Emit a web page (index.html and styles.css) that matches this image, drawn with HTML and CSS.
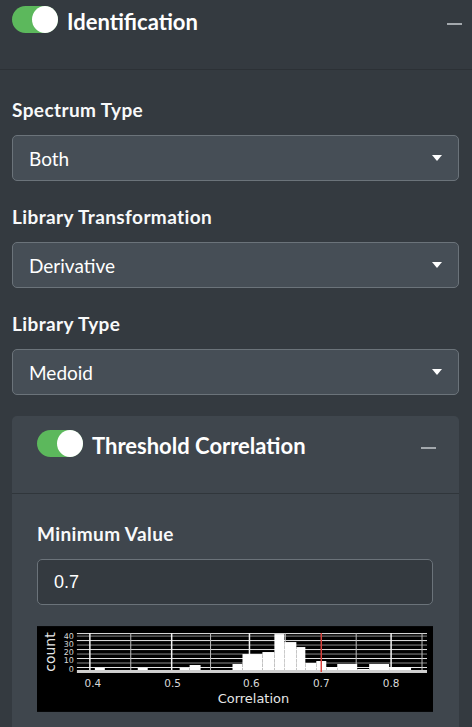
FILE: index.html
```html
<!DOCTYPE html>
<html>
<head>
<meta charset="utf-8">
<link rel="stylesheet" href="styles.css">
</head>
<body>
<div class="box-header">
  <div class="toggle"><span class="knob"></span></div>
  <div class="title">Identification</div>
  <div class="minus"></div>
</div>
<div class="box-body">
  <div class="field">
    <div class="label">Spectrum Type</div>
    <div class="select"><span>Both</span><span class="caret"></span></div>
  </div>
  <div class="field">
    <div class="label">Library Transformation</div>
    <div class="select"><span>Derivative</span><span class="caret"></span></div>
  </div>
  <div class="field">
    <div class="label">Library Type</div>
    <div class="select"><span>Medoid</span><span class="caret"></span></div>
  </div>
  <div class="card">
    <div class="card-header">
      <div class="toggle"><span class="knob"></span></div>
      <div class="title">Threshold Correlation</div>
      <div class="minus"></div>
    </div>
    <div class="card-body">
      <div class="label">Minimum Value</div>
      <div class="input">0.7</div>
      <div class="plot">
        <svg width="397" height="86" viewBox="0 0 397 86" xmlns="http://www.w3.org/2000/svg">
          <rect x="0" y="0" width="397" height="86" fill="#000"/>
          <g stroke="#8a8a8a" stroke-width="1">
            <line x1="40" y1="10" x2="391" y2="10"/>
            <line x1="40" y1="19" x2="391" y2="19"/>
            <line x1="40" y1="28" x2="391" y2="28"/>
            <line x1="40" y1="37" x2="391" y2="37"/>
          </g>
          <g stroke="#e6e6e6" stroke-width="1">
            <line x1="40" y1="7.5" x2="391" y2="7.5"/>
            <line x1="40" y1="14.5" x2="391" y2="14.5"/>
            <line x1="40" y1="23.5" x2="391" y2="23.5"/>
            <line x1="40" y1="32.5" x2="391" y2="32.5"/>
            <line x1="40" y1="41.5" x2="391" y2="41.5"/>
          </g>
          <g stroke="#bdbdbd" stroke-width="1">
            <line x1="94" y1="7" x2="94" y2="46"/>
            <line x1="174" y1="7" x2="174" y2="46"/>
            <line x1="249" y1="7" x2="249" y2="46"/>
            <line x1="320" y1="7" x2="320" y2="46"/>
            <line x1="386" y1="7" x2="386" y2="46"/>
          </g>
          <g stroke="#f2f2f2" stroke-width="1.5">
            <line x1="53" y1="7" x2="53" y2="46"/>
            <line x1="135" y1="7" x2="135" y2="46"/>
            <line x1="213" y1="7" x2="213" y2="46"/>
            <line x1="355" y1="7" x2="355" y2="46"/>
          </g>
          <rect x="40" y="44" width="351" height="3" fill="#cfcfcf"/>
          <g fill="#fff">
            <rect x="58" y="42" width="10" height="2"/>
            <rect x="101" y="42" width="10" height="2"/>
            <rect x="143" y="42" width="10" height="2"/>
            <rect x="153" y="39" width="11" height="5"/>
            <rect x="196" y="38" width="10" height="6"/>
            <rect x="206" y="28" width="20" height="16"/>
            <rect x="226" y="26" width="12" height="18"/>
            <rect x="238" y="8" width="10" height="36"/>
            <rect x="248" y="16" width="12" height="28"/>
            <rect x="260" y="21" width="9" height="23"/>
            <rect x="269" y="37" width="11" height="7"/>
            <rect x="280" y="35" width="10" height="9"/>
            <rect x="290" y="41" width="11" height="3"/>
            <rect x="301" y="38" width="20" height="6"/>
            <rect x="321" y="43" width="12" height="1"/>
            <rect x="333" y="38" width="20" height="6"/>
            <rect x="353" y="41" width="22" height="3"/>
          </g>
          <line x1="285" y1="7" x2="285" y2="46" stroke="#d9413c" stroke-width="1.5"/>
          <g fill="#d9d9d9" font-family="DejaVu Sans, sans-serif" font-size="10.5" text-anchor="middle">
            <text x="56" y="61">0.4</text>
            <text x="136" y="61">0.5</text>
            <text x="215" y="61">0.6</text>
            <text x="285" y="61">0.7</text>
            <text x="355" y="61">0.8</text>
          </g>
          <g fill="#d9d9d9" font-family="DejaVu Sans, sans-serif" font-size="8" text-anchor="end">
            <text x="37" y="13">40</text>
            <text x="37" y="21">30</text>
            <text x="37" y="29">20</text>
            <text x="37" y="37">10</text>
            <text x="37" y="46">0</text>
          </g>
          <text x="217" y="77" fill="#e6e6e6" font-family="DejaVu Sans, sans-serif" font-size="13" text-anchor="middle">Correlation</text>
          <text transform="translate(18 26) rotate(-90)" fill="#e6e6e6" font-family="DejaVu Sans, sans-serif" font-size="14" text-anchor="middle">count</text>
        </svg>
      </div>
    </div>
  </div>
</div>
</body>
</html>
```
FILE: styles.css
```css
html, body {
  margin: 0;
  padding: 0;
}
body {
  background: #343a40;
  color: #fff;
  font-family: "Lato", "Noto Sans", sans-serif;
  width: 472px;
  height: 727px;
  overflow: hidden;
}
.box-header {
  display: flex;
  align-items: flex-start;
  height: 70px;
  box-sizing: border-box;
  padding: 6px 10px 0 12px;
  border-bottom: 1px solid #2c3136;
}
.toggle {
  width: 46px;
  height: 27px;
  border-radius: 14px;
  background: #5cb85c;
  display: flex;
  justify-content: flex-end;
  flex: none;
}
.knob {
  width: 26px;
  height: 27px;
  border-radius: 50%;
  background: #fff;
}
.title {
  margin-left: 9px;
  padding-top: 2px;
  font-weight: 700;
  font-size: 22px;
  line-height: 27px;
}
.minus {
  margin-left: auto;
  width: 15px;
  height: 2px;
  background: #a3a8ad;
  margin-top: 17px;
}
.box-body {
  padding: 4px 13px 0 12px;
}
.label {
  font-weight: 700;
  font-size: 19px;
  line-height: 23px;
  letter-spacing: 0.4px;
  color: #f8f9fa;
}
.field {
  padding-top: 24px;
}
.field .label {
  margin-bottom: 14px;
}
.select {
  height: 46px;
  box-sizing: border-box;
  border: 1px solid #6b737a;
  border-radius: 5px;
  background: #464e56;
  display: flex;
  align-items: center;
  justify-content: space-between;
  padding: 0 16px 0 16px;
  font-size: 19px;
}
.caret {
  width: 0;
  height: 0;
  border-left: 5.5px solid transparent;
  border-right: 5.5px solid transparent;
  border-top: 6px solid #fff;
}
.card {
  margin-top: 21px;
  background: #3f464d;
  border-radius: 5px;
  height: 320px;
}
.card-header {
  display: flex;
  align-items: flex-start;
  height: 78px;
  box-sizing: border-box;
  padding: 14px 23px 0 25px;
  border-bottom: 1px solid #30363b;
}
.card-header .title {
  margin-left: 9px;
}
.card-header .minus {
  margin-top: 17px;
}
.card-body {
  padding: 28px 26px 0 25px;
}
.input {
  margin-top: 14px;
  height: 46px;
  box-sizing: border-box;
  border: 1px solid #6b737a;
  border-radius: 5px;
  background: #343a40;
  display: flex;
  align-items: center;
  padding: 0 16px;
  font-family: "Liberation Sans", Arial, sans-serif;
  font-size: 18px;
}
.plot {
  margin-top: 21px;
  height: 86px;
  display: flex;
}
```
